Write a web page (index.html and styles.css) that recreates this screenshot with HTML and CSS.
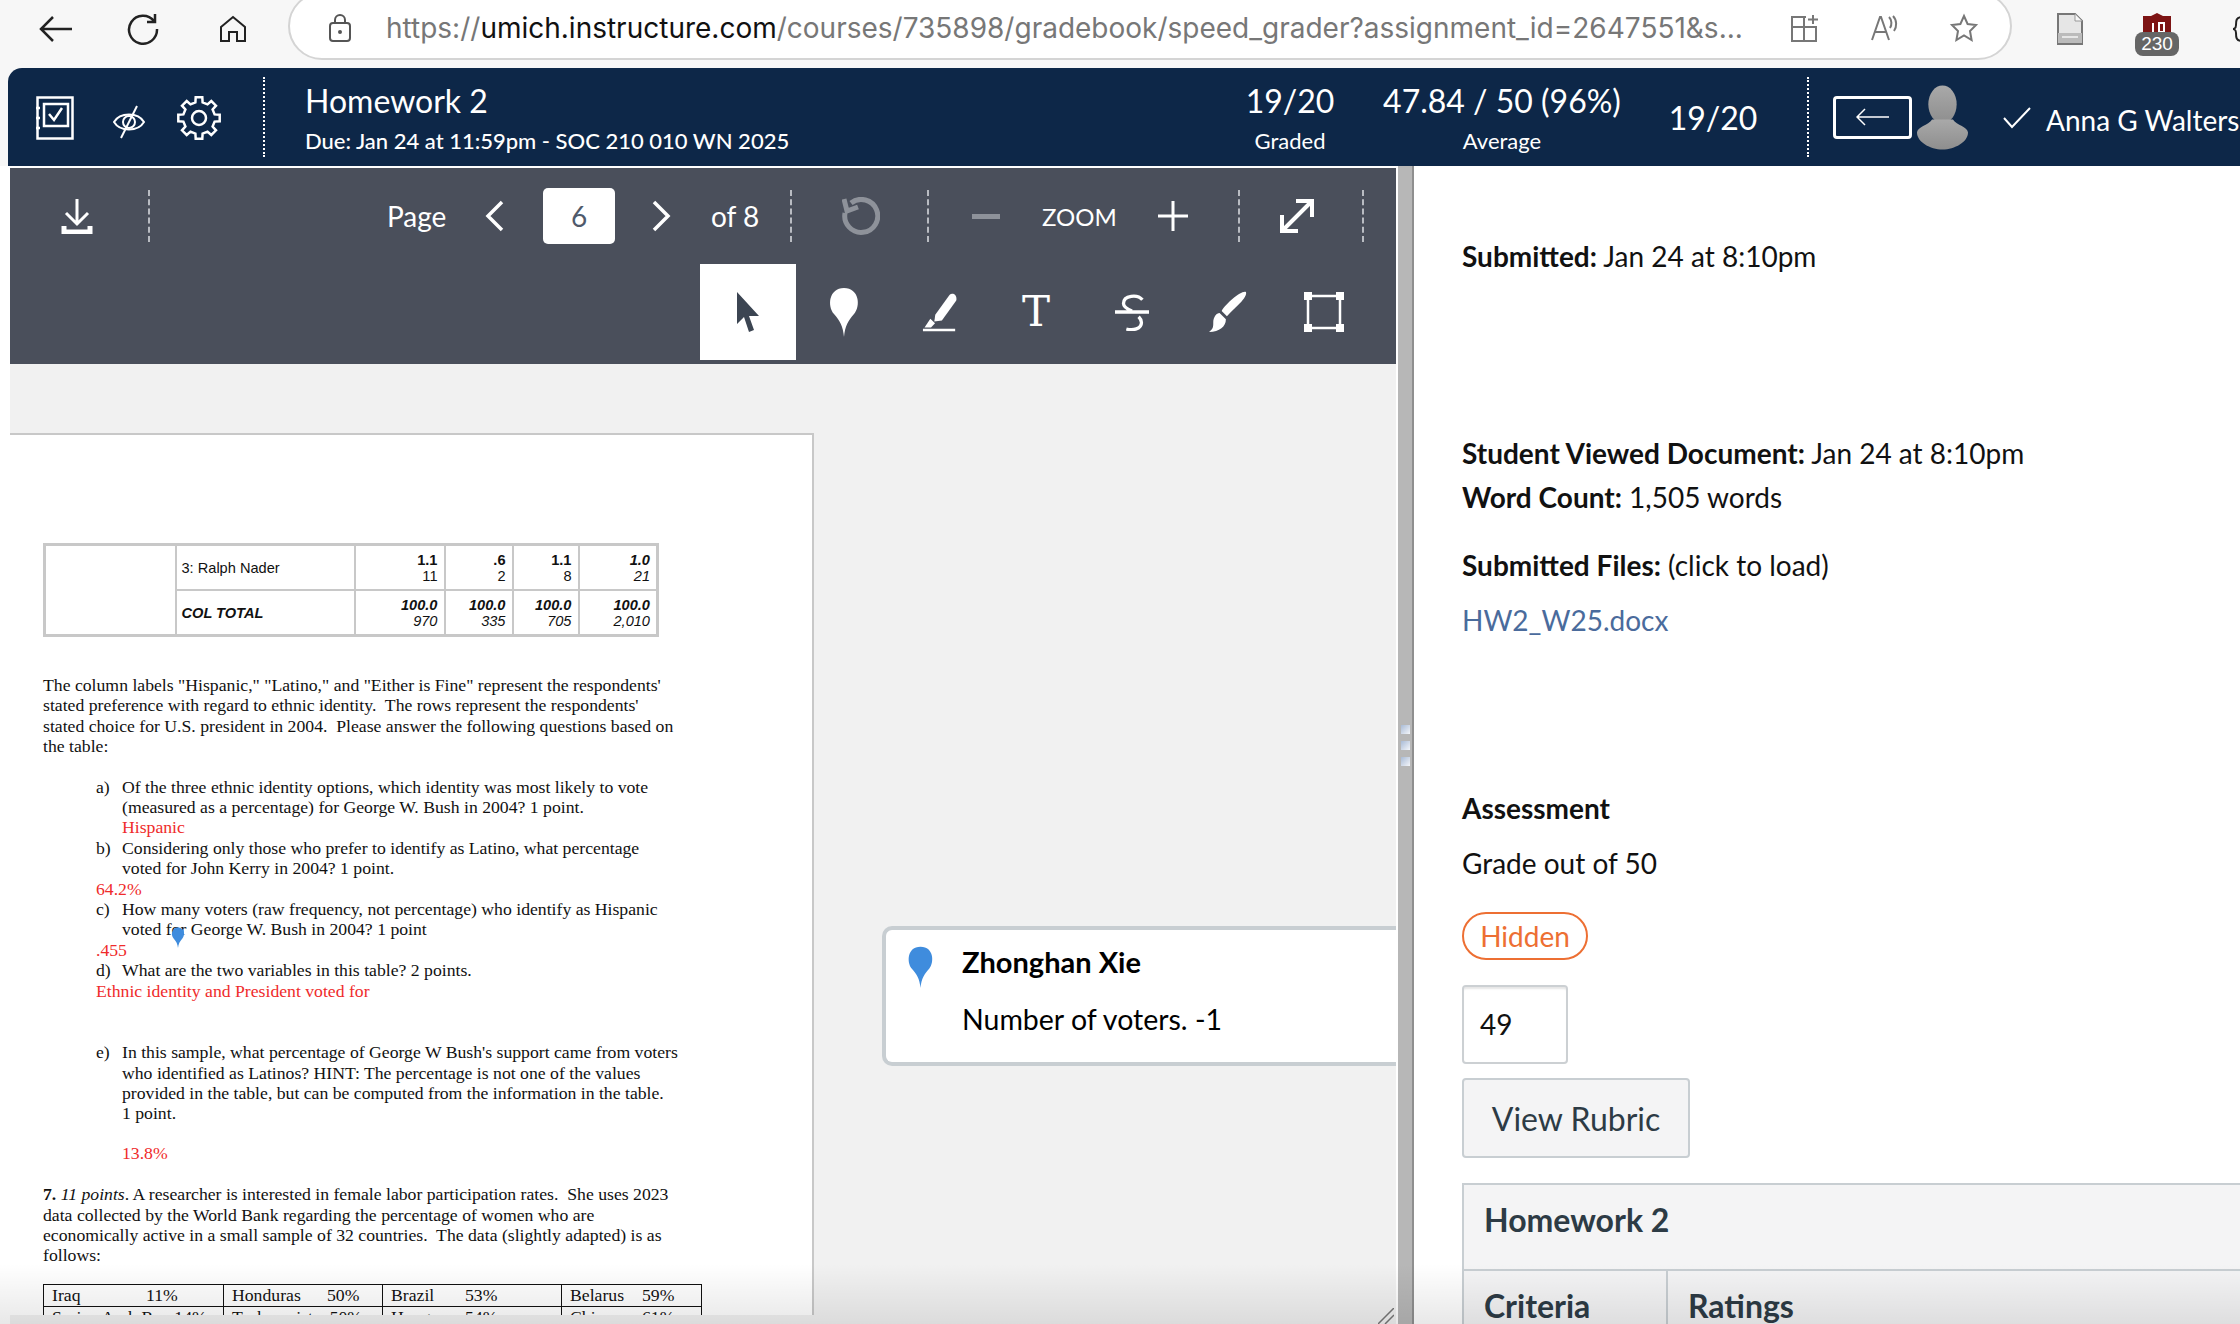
FILE: index.html
```html
<!DOCTYPE html>
<html lang="en">
  <head>
    <meta charset="UTF-8" />
    <title>SpeedGrader</title>
    <link rel="stylesheet" href="styles.css">
  </head>
  <body>
    <div class="browser-bar">
      <svg class="nav-icon back" viewBox="0 0 34 28"><path d="M33 14H2M14 2 2 14l12 12" /></svg>
      <svg class="nav-icon reload" viewBox="0 0 34 34"><path d="M27 9a14 14 0 1 0 3 8M28 2v8h-8" /></svg>
      <svg class="nav-icon home" viewBox="0 0 30 30"><path d="M3 13 15 3l12 10v14h-8v-9h-8v9H3z" /></svg>
      <div class="url-pill">
        <svg class="lock" viewBox="0 0 24 30"><rect x="2" y="10" width="20" height="18" rx="3" /><path d="M7 10V7a5 5 0 0 1 10 0v3" /><circle cx="12" cy="19" r="1" /></svg>
        <div class="url"><span class="url-dim">https://</span>umich.instructure.com<span class="url-dim">/courses/735898/gradebook/speed_grader?assignment_id=2647551&amp;s...</span></div>
        <svg class="pill-icon" viewBox="0 0 30 30"><path d="M17 4H3v24h24V14H3M15 4v24M24 2v9M19 6.500h10" /></svg>
        <svg class="pill-icon" viewBox="0 0 30 30"><path d="M3 27 11 4h1l8 23M6 19h11M20 4c3 3 3 8 1 11M24 3c4 4 4 11 1 15" /></svg>
        <svg class="pill-icon" viewBox="0 0 30 30"><path d="m15 3 3.600 8 8.400 1-6 6 1.600 9-7.600-4.500L7.400 27 9 18l-6-6 8.400-1z" /></svg>
      </div>
      <svg class="ext-doc" viewBox="0 0 28 32"><path d="M2 1h17l7 7v23H2z" fill="#e6e6e6" stroke="#777" stroke-width="2" /><path d="M19 1v7h7" fill="#f6f6f6" stroke="#999" /><rect x="2" y="20" width="24" height="10" fill="#bbb" /><rect x="6" y="23" width="16" height="2" fill="#e6e6e6" /></svg>
      <div class="ext-badge">
        <svg class="ext-cal" viewBox="0 0 28 21"><path d="M0 4h8l6-3 6 3h8v17H0z" fill="#7d1414" /><path d="M10 11v9M16 11h5v9h-5z" stroke="#fff" stroke-width="2" fill="none" /></svg>
        <span class="ext-count">230</span>
      </div>
      <svg class="ext-edge" viewBox="0 0 10 32"><path d="M10 4C4 4 4 8 4 12s-3 4-3 4 3 0 3 4 0 8 6 8" /></svg>
    </div>

    <header class="grader-header">
      <svg class="hd-icon checklist" viewBox="0 0 38 44"><rect x="1.500" y="1.500" width="35" height="41" /><rect x="8" y="8" width="24" height="22" /><path d="m13 18 5 6 8-12M0 12h4M0 22h4M0 32h4" /></svg>
      <svg class="hd-icon eye" viewBox="0 0 32 36"><path d="M1 18c6-10 24-10 30 0-6 10-24 10-30 0z" /><circle cx="16" cy="18" r="6" /><path d="M24 2 8 34" /></svg>
      <svg class="hd-icon gear" viewBox="0 0 44 44"><path d="M18.400 6.400 18.700 1.300H25.300L25.600 6.400 30.500 8.400 34.300 5 39 9.700 35.600 13.500 37.600 18.400 42.700 18.700V25.300L37.600 25.600 35.600 30.500 39 34.300 34.300 39 30.500 35.600 25.600 37.600 25.300 42.700H18.700L18.400 37.600 13.500 35.600 9.700 39 5 34.300 8.400 30.500 6.400 25.600 1.300 25.300V18.700L6.400 18.400 8.400 13.500 5 9.700 9.700 5 13.500 8.400z" /><circle cx="22" cy="22" r="7" /></svg>
      <div class="hd-sep first"></div>
      <div class="hd-title">
        <div class="hd-name">Homework 2</div>
        <div class="hd-due">Due: Jan 24 at 11:59pm - SOC 210 010 WN 2025</div>
      </div>
      <div class="hd-stat graded"><div class="stat-num">19/20</div><div class="stat-label">Graded</div></div>
      <div class="hd-stat average"><div class="stat-num">47.84 / 50 (96%)</div><div class="stat-label">Average</div></div>
      <div class="hd-count">19/20</div>
      <div class="hd-sep"></div>
      <button class="hd-back"><svg viewBox="0 0 34 20"><path d="M33 10H1M9 2l-8 8 8 8" /></svg></button>
      <svg class="avatar" viewBox="0 0 54 68"><defs><linearGradient id="av" x1="0" y1="0" x2="0" y2="1"><stop offset="0" stop-color="#a9a9a9" /><stop offset="1" stop-color="#8e8e8e" /></linearGradient></defs><ellipse cx="27" cy="20" rx="15" ry="20" fill="url(#av)" /><path d="M16 36c-4 6-16 8-16 14 0 10 14 18 27 18s27-8 27-18c0-6-12-8-16-14z" fill="url(#av)" /></svg>
      <svg class="name-check" viewBox="0 0 28 22"><path d="m1 11 8 9L27 1" /></svg>
      <div class="hd-student">Anna G Walters</div>
    </header>

    <main class="grader-main">
      <section class="viewer">
        <div class="toolbar">
          <div class="tool-row top">
            <svg class="tb-icon download" viewBox="0 0 34 36"><path d="M17 1v24M6 15l11 11 11-11" /><path class="thick" d="M4 28v6h26v-6" /></svg>
            <div class="tb-sep first"></div>
            <span class="tb-label page-label">Page</span>
            <svg class="tb-chevron" viewBox="0 0 20 32"><path d="M17 2 3 16l14 14" /></svg>
            <div class="page-box">6</div>
            <svg class="tb-chevron" viewBox="0 0 20 32"><path d="m3 2 14 14L3 30" /></svg>
            <span class="tb-label of-label">of 8</span>
            <div class="tb-sep"></div>
            <svg class="tb-icon rotate" viewBox="0 0 38 38"><path d="M9 6a16.500 16.500 0 1 1-6 10M2 2l3 12 11-4" /></svg>
            <div class="tb-sep"></div>
            <div class="tb-minus"></div>
            <span class="tb-zoom">ZOOM</span>
            <svg class="tb-icon plus" viewBox="0 0 30 30"><path d="M15 0v30M0 15h30" /></svg>
            <div class="tb-sep"></div>
            <svg class="tb-icon expand" viewBox="0 0 36 36"><path d="M3 33 33 3M17 3h16v16M3 17v16h16" /></svg>
            <div class="tb-sep"></div>
          </div>
          <div class="tool-row bottom">
            <div class="tool active"><svg class="tool-svg arrow" viewBox="0 0 24 42"><path d="M1 1v32l7-7 5 15 5-2-5-14h10z" fill="#3c4552" /></svg></div>
            <div class="tool"><svg class="tool-svg pin" viewBox="0 0 36 50"><path d="M18 50c-1-11-4-16-10-23C1 19 3 1 18 1s17 18 10 26c-6 7-9 12-10 23z" fill="#fff" /></svg></div>
            <div class="tool"><svg class="tool-svg marker" viewBox="0 0 38 42"><path d="m14 24 15-21c2-2 5-1 6 0s2 4 1 6L21 30l-8 1z" fill="#fff" /><path d="m9 30 3 3-3 3H5zM1 40h34" stroke="#fff" stroke-width="2.500" fill="#fff" /></svg></div>
            <div class="tool"><span class="tool-t">T</span></div>
            <div class="tool"><svg class="tool-svg strike" viewBox="0 0 36 40"><path d="M29 7C24 1 9 2 9 11c0 4 4 6 9 8M0 20h36M12 38c7 2 16 0 16-7 0-3-1-4-3-6" fill="none" stroke="#fff" stroke-width="3.500" /></svg></div>
            <div class="tool"><svg class="tool-svg" viewBox="0 0 38 40"><path d="M36 1c1 2-1 6-6 11-5 5-9 9-12 12l-5-5C17 12 32-1 36 1zM11 21l6 6c0 7-6 12-16 12 4-3 4-5 4-9 0-5 3-9 6-9z" fill="#fff" /></svg></div>
            <div class="tool"><svg class="tool-svg" viewBox="0 0 40 40"><rect x="4" y="4" width="32" height="32" fill="none" stroke="#fff" stroke-width="2.500" /><path d="M0 0h8v8H0zM32 0h8v8h-8zM0 32h8v8H0zM32 32h8v8h-8z" fill="#fff" /></svg></div>
          </div>
        </div>

        <div class="doc-area">
          <article class="page">
            <table class="cross">
              <colgroup><col class="c-stub"><col class="c-name"><col class="c-a"><col class="c-b"><col class="c-c"><col class="c-d"></colgroup>
              <tr>
                <td rowspan="2"></td>
                <td class="row-name">3: Ralph Nader</td>
                <td class="num"><b>1.1</b><br>11</td>
                <td class="num"><b>.6</b><br>2</td>
                <td class="num"><b>1.1</b><br>8</td>
                <td class="num it"><b>1.0</b><br>21</td>
              </tr>
              <tr>
                <td class="row-name it"><b>COL TOTAL</b></td>
                <td class="num it"><b>100.0</b><br>970</td>
                <td class="num it"><b>100.0</b><br>335</td>
                <td class="num it"><b>100.0</b><br>705</td>
                <td class="num it"><b>100.0</b><br>2,010</td>
              </tr>
            </table>

            <p class="intro">The column labels "Hispanic," "Latino," and "Either is Fine" represent the respondents'<br>stated preference with regard to ethnic identity.&nbsp; The rows represent the respondents'<br>stated choice for U.S. president in 2004.&nbsp; Please answer the following questions based on<br>the table:</p>

            <div class="question"><span class="q-mark">a)</span><div>Of the three ethnic identity options, which identity was most likely to vote<br>(measured as a percentage) for George W. Bush in 2004? 1 point.<br><span class="red">Hispanic</span></div></div>
            <div class="question"><span class="q-mark">b)</span><div>Considering only those who prefer to identify as Latino, what percentage<br>voted for John Kerry in 2004? 1 point.</div></div>
            <div class="answer red">64.2%</div>
            <div class="question"><span class="q-mark">c)</span><div>How many voters (raw frequency, not percentage) who identify as Hispanic<br>voted f<span class="pin-anchor">o<svg class="doc-pin" viewBox="0 0 36 48"><path d="M18 48c-1-10-4-15-10-22C1 18 3 1 18 1s17 17 10 25c-6 7-9 12-10 22z" /></svg></span>r George W. Bush in 2004? 1 point</div></div>
            <div class="answer red">.455</div>
            <div class="question"><span class="q-mark">d)</span><div>What are the two variables in this table? 2 points.</div></div>
            <div class="answer red">Ethnic identity and President voted for</div>

            <div class="question q-e"><span class="q-mark">e)</span><div>In this sample, what percentage of George W Bush's support came from voters<br>who identified as Latinos? HINT: The percentage is not one of the values<br>provided in the table, but can be computed from the information in the table.<br>1 point.</div></div>
            <div class="answer-e red">13.8%</div>

            <p class="q-seven"><b>7.</b> <i>11 points</i>. A researcher is interested in female labor participation rates.&nbsp; She uses 2023<br>data collected by the World Bank regarding the percentage of women who are<br>economically active in a small sample of 32 countries.&nbsp; The data (slightly adapted) is as<br>follows:</p>

            <table class="countries">
              <colgroup><col class="k-a"><col class="k-b"><col class="k-c"><col class="k-d"></colgroup>
              <tr><td><span>Iraq</span><span>11%</span></td><td><span>Honduras</span><span>50%</span></td><td><span>Brazil</span><span>53%</span></td><td><span>Belarus</span><span>59%</span></td></tr>
              <tr><td><span>Syrian Arab Rep.</span><span>14%</span></td><td><span>Turkmenistan</span><span>50%</span></td><td><span>Hungary</span><span>54%</span></td><td><span>China</span><span>61%</span></td></tr>
            </table>
          </article>

          <aside class="comment">
            <svg class="comment-pin" viewBox="0 0 36 60" preserveAspectRatio="none"><path d="M18 60c-1-14-5-20-11-28C1 24 1 1 18 1s17 23 11 31c-6 8-10 14-11 28z" /></svg>
            <div class="comment-body">
              <div class="comment-name">Zhonghan Xie</div>
              <div class="comment-text">Number of voters. -1</div>
            </div>
          </aside>

          <svg class="resize-grip" viewBox="0 0 16 16"><path d="M16 0 0 16M16 7l-9 9" /></svg>
        </div>
      </section>

      <div class="splitter">
        <span class="split-dot"></span><span class="split-dot"></span><span class="split-dot"></span>
      </div>

      <section class="panel">
        <p class="meta submitted"><b>Submitted:</b> Jan 24 at 8:10pm</p>
        <p class="meta viewed"><b>Student Viewed Document:</b> Jan 24 at 8:10pm</p>
        <p class="meta words"><b>Word Count:</b> 1,505 words</p>
        <p class="meta files"><b>Submitted Files:</b> (click to load)</p>
        <a class="file-link" href="#">HW2_W25.docx</a>
        <h2 class="assess">Assessment</h2>
        <div class="grade-out">Grade out of 50</div>
        <span class="hidden-pill">Hidden</span>
        <div class="grade-box">49</div>
        <button class="rubric-btn">View Rubric</button>
        <div class="rubric">
          <div class="rubric-title">Homework 2</div>
          <div class="rubric-head"><div class="rubric-crit">Criteria</div><div class="rubric-rate">Ratings</div></div>
        </div>
      </section>
    </main>

    <div class="bottom-fade"></div>
  </body>
</html>
```

FILE: styles.css
```css
* {
  box-sizing: border-box;
}
html,
body {
  margin: 0;
  height: 100%;
}
body {
  width: 2240px;
  height: 1324px;
  overflow: hidden;
  background: #f7f7f7;
  font-family: Lato, sans-serif;
  position: relative;
}

/* browser chrome */
.browser-bar {
  height: 68px;
  padding-bottom: 10px;
  display: flex;
  align-items: center;
  overflow: hidden;
}
.nav-icon {
  fill: none;
  stroke: #222;
  stroke-width: 2.500;
  flex: none;
}
.nav-icon.back {
  width: 34px;
  height: 28px;
  margin-left: 39px;
}
.nav-icon.reload {
  width: 34px;
  height: 34px;
  margin-left: 54px;
}
.nav-icon.home {
  width: 30px;
  height: 30px;
  margin-left: 57px;
  stroke-width: 2;
}
.url-pill {
  width: 1724px;
  height: 68px;
  margin: -6px 0 0 40px;
  flex: none;
  display: flex;
  align-items: center;
  background: #fff;
  border: 2px solid #d4d4d4;
  border-radius: 34px;
  padding: 4px 0 0 38px;
}
.lock {
  width: 24px;
  height: 30px;
  fill: none;
  stroke: #555;
  stroke-width: 2;
  flex: none;
}
.url {
  margin-left: 34px;
  width: 1353px;
  flex: none;
  font-family: Inter, sans-serif;
  font-size: 28px;
  color: #111;
  white-space: nowrap;
}
.url-dim {
  color: #777;
}
.pill-icon {
  width: 30px;
  height: 30px;
  margin-left: 50px;
  fill: none;
  stroke: #777;
  stroke-width: 2;
  flex: none;
}
.ext-doc {
  width: 28px;
  height: 32px;
  margin-left: 44px;
  flex: none;
}
.ext-badge {
  margin: 10px 0 0 51px;
  width: 44px;
  display: flex;
  flex-direction: column;
  align-items: center;
  flex: none;
}
.ext-cal {
  width: 28px;
  height: 21px;
  display: block;
  margin-bottom: -1px;
}
.ext-count {
  width: 44px;
  height: 24px;
  background: #666;
  color: #fff;
  border-radius: 8px;
  font-family: "Liberation Sans", sans-serif;
  font-size: 19px;
  line-height: 24px;
  text-align: center;
  position: relative;
}
.ext-edge {
  width: 10px;
  height: 32px;
  margin-left: 53px;
  fill: none;
  stroke: #222;
  stroke-width: 2;
  flex: none;
}

/* assignment header */
.grader-header {
  height: 98px;
  margin-left: 8px;
  background: #0d2748;
  border-top-left-radius: 14px;
  display: flex;
  align-items: center;
  color: #fff;
  overflow: hidden;
}
.hd-icon {
  fill: none;
  stroke: #fff;
  stroke-width: 2.500;
  flex: none;
}
.hd-icon.checklist {
  width: 38px;
  height: 44px;
  margin: 2px 0 0 28px;
}
.hd-icon.eye {
  width: 32px;
  height: 36px;
  margin: 10px 0 0 39px;
  stroke-width: 2;
}
.hd-icon.gear {
  width: 44px;
  height: 44px;
  margin: 2px 0 0 32px;
}
.hd-sep {
  width: 0;
  height: 80px;
  border-left: 2px dotted #fff;
  flex: none;
}
.hd-sep.first {
  margin-left: 42px;
}
.hd-title {
  margin-left: 40px;
  width: 900px;
  flex: none;
}
.hd-name {
  font-size: 32px;
  line-height: 38px;
  padding-top: 3px;
}
.hd-due {
  margin-top: 7px;
  font-size: 22px;
  font-weight: 500;
  line-height: 28px;
}
.hd-stat {
  text-align: center;
  flex: none;
}
.stat-num {
  font-size: 32px;
  line-height: 38px;
  padding-top: 3px;
}
.stat-label {
  margin-top: 7px;
  font-size: 22px;
  line-height: 28px;
}
.hd-stat.graded {
  width: 130px;
  margin-left: 20px;
}
.hd-stat.average {
  width: 250px;
  margin-left: 22px;
}
.hd-count {
  width: 100px;
  margin-left: 36px;
  text-align: center;
  font-size: 32px;
  flex: none;
}
.hd-count + .hd-sep {
  margin-left: 44px;
}
.hd-back {
  width: 79px;
  height: 43px;
  margin: 0 0 0 24px;
  padding: 0;
  flex: none;
  background: transparent;
  border: 3px solid #fff;
  border-radius: 4px;
  display: flex;
  align-items: center;
  justify-content: center;
}
.hd-back svg {
  width: 34px;
  height: 20px;
  fill: none;
  stroke: #fff;
  stroke-width: 1.500;
}
.avatar {
  width: 51px;
  height: 67px;
  margin-left: 5px;
  flex: none;
}
.name-check {
  width: 28px;
  height: 22px;
  margin: 2px 0 0 35px;
  fill: none;
  stroke: #fff;
  stroke-width: 2;
  flex: none;
}
.hd-student {
  margin: 6px 0 0 15px;
  font-size: 28px;
  white-space: nowrap;
  flex: none;
}

/* main split */
.grader-main {
  height: 1158px;
  display: flex;
}
.viewer {
  width: 1398px;
  flex: none;
  padding: 2px 2px 0 10px;
  background: #fff;
  display: flex;
  flex-direction: column;
}
.toolbar {
  height: 196px;
  flex: none;
  background: #4a4f5b;
  color: #fff;
}
.tool-row {
  display: flex;
  align-items: center;
}
.tool-row.top {
  height: 96px;
}
.tool-row.bottom {
  padding-left: 690px;
}
.tb-sep {
  width: 0;
  height: 52px;
  border-left: 2px dashed #b9bcc2;
  flex: none;
}
.tb-icon {
  fill: none;
  stroke: #fff;
  stroke-width: 3;
  flex: none;
}
.tb-icon .thick {
  stroke-width: 5;
}
.tb-icon.download {
  width: 34px;
  height: 36px;
  margin-left: 50px;
}
.tb-sep.first {
  margin-left: 54px;
}
.tb-label {
  font-size: 28px;
  white-space: nowrap;
  flex: none;
}
.page-label {
  margin-left: 237px;
  width: 62px;
}
.tb-chevron {
  width: 20px;
  height: 32px;
  fill: none;
  stroke: #fff;
  stroke-width: 3.500;
  flex: none;
}
.page-label + .tb-chevron {
  margin: 0 38px 0 36px;
}
.page-box + .tb-chevron {
  margin: 0 40px 0 36px;
}
.page-box {
  width: 72px;
  height: 56px;
  background: #fff;
  border-radius: 5px;
  color: #4f5a6b;
  font-size: 28px;
  line-height: 56px;
  text-align: center;
  flex: none;
}
.of-label {
  width: 46px;
  margin-right: 33px;
}
.tb-icon.rotate {
  width: 38px;
  height: 38px;
  margin: 0 47px 0 50px;
  stroke: #8e929a;
  stroke-width: 5;
}
.tb-minus {
  width: 28px;
  height: 5px;
  margin-left: 43px;
  background: #8e929a;
  flex: none;
}
.tb-zoom {
  margin-left: 42px;
  width: 76px;
  font-size: 24px;
  flex: none;
}
.tb-icon.plus {
  width: 30px;
  height: 30px;
  margin: 0 50px 0 40px;
}
.tb-icon.expand {
  width: 36px;
  height: 36px;
  margin: 0 47px 0 39px;
  stroke-width: 4;
}
.tool {
  width: 96px;
  height: 96px;
  display: flex;
  align-items: center;
  justify-content: center;
  flex: none;
}
.tool.active {
  background: #fff;
}
.tool-svg {
  width: 40px;
  height: 46px;
}
.tool-svg.arrow {
  width: 24px;
  height: 42px;
}
.tool-svg.pin {
  width: 36px;
  height: 50px;
}
.tool-svg.marker {
  width: 36px;
  height: 40px;
}
.tool-svg.strike {
  width: 34px;
  height: 38px;
}
.tool-t {
  font-family: "DejaVu Serif", serif;
  font-size: 42px;
  line-height: 1;
}

/* document area */
.doc-area {
  flex: 1;
  min-height: 0;
  display: flex;
  align-items: flex-start;
  background: #f1f1f1;
  position: relative;
  overflow: hidden;
}
.page {
  width: 804px;
  height: 882px;
  margin-top: 69px;
  padding: 108px 0 0 33px;
  flex: none;
  background: #fff;
  border: 2px solid #c8c8c8;
  border-left: 0;
  border-bottom: 0;
  overflow: hidden;
  font-family: "Liberation Serif", serif;
  font-size: 17.700px;
  line-height: 20.400px;
  color: #111;
}
.cross {
  width: 613px;
  height: 94px;
  border-collapse: collapse;
  table-layout: fixed;
  border: 3px solid #c8c8c8;
  font-family: "Liberation Sans", sans-serif;
  font-size: 14.600px;
  line-height: 16px;
}
.c-stub {
  width: 131px;
}
.c-name {
  width: 179px;
}
.c-a {
  width: 90px;
}
.c-b {
  width: 68px;
}
.c-c {
  width: 66px;
}
.c-d {
  width: 79px;
}
.cross td {
  border: 2px solid #c8c8c8;
  padding: 0 6px;
}
.cross .row-name {
  padding-left: 5px;
}
.cross .num {
  text-align: right;
}
.it {
  font-style: italic;
}
.intro {
  margin: 38px 0 0;
}
.question {
  display: flex;
}
.intro + .question {
  margin-top: 20px;
}
.q-mark {
  width: 26px;
  margin-left: 53px;
  flex: none;
}
.answer {
  margin-left: 53px;
}
.red {
  color: #ef2b2b;
}
.pin-anchor {
  position: relative;
}
.doc-pin {
  position: absolute;
  left: -3px;
  top: 8px;
  width: 18px;
  height: 21px;
  fill: #3f8cdd;
}
.question.q-e {
  margin-top: 41px;
}
.answer-e {
  margin: 19px 0 0 79px;
}
.q-seven {
  margin: 21px 0 0;
}
.countries {
  width: 658px;
  margin-top: 18px;
  border-collapse: collapse;
  table-layout: fixed;
  line-height: 21px;
}
.k-a {
  width: 180px;
}
.k-b {
  width: 159px;
}
.k-c {
  width: 179px;
}
.k-d {
  width: 140px;
}
.countries td {
  border: 1.500px solid #111;
  padding: 0 8px;
  white-space: nowrap;
}
.countries td span {
  display: inline-block;
}
.countries td:nth-child(1) span:first-child {
  min-width: 94px;
}
.countries td:nth-child(2) span:first-child {
  min-width: 95px;
}
.countries td:nth-child(3) span:first-child {
  min-width: 74px;
}
.countries td:nth-child(4) span:first-child {
  min-width: 72px;
}
.comment {
  width: 517px;
  height: 140px;
  margin: 562px 0 0 68px;
  flex: none;
  display: flex;
  padding: 12px 0 0 20px;
  background: #fff;
  border: 4px solid #c8ced2;
  border-right: 0;
  border-radius: 10px 0 0 10px;
}
.comment-pin {
  width: 29px;
  height: 42px;
  margin-top: 4px;
  fill: #3f8cdd;
  flex: none;
}
.comment-body {
  margin-left: 27px;
  color: #000;
}
.comment-name {
  font-size: 29px;
  font-weight: 700;
  line-height: 40px;
}
.comment-text {
  margin-top: 17px;
  font-size: 28.500px;
  line-height: 40px;
}
.resize-grip {
  position: absolute;
  right: 2px;
  bottom: 0;
  width: 16px;
  height: 16px;
  fill: none;
  stroke: #777;
  stroke-width: 1.500;
}

/* splitter */
.splitter {
  width: 16px;
  flex: none;
  background: #b7b7b7;
  border-right: 2px solid #8f8f8f;
  display: flex;
  flex-direction: column;
  align-items: center;
  justify-content: center;
  gap: 7px;
}
.split-dot {
  width: 9px;
  height: 9px;
  background: linear-gradient(to bottom right, #a9bbd6, #f4f6fa);
}

/* right panel */
.panel {
  flex: 1;
  min-width: 0;
  padding-left: 48px;
  background: #fff;
  color: #111;
  font-size: 28px;
  overflow: hidden;
}
.meta {
  margin: 0;
  line-height: 36px;
  white-space: nowrap;
}
.meta b {
  font-weight: 700;
}
.meta.submitted {
  margin-top: 72px;
}
.meta.viewed {
  margin-top: 161px;
}
.meta.words {
  margin-top: 8px;
}
.meta.files {
  margin-top: 32px;
}
.file-link {
  display: block;
  margin-top: 19px;
  line-height: 36px;
  color: #4a6b9c;
  text-decoration: none;
}
.assess {
  margin: 152px 0 0;
  font-size: 28px;
  font-weight: 700;
  line-height: 36px;
}
.grade-out {
  margin-top: 19px;
  line-height: 36px;
}
.hidden-pill {
  display: block;
  width: 126px;
  height: 48px;
  margin-top: 31px;
  border: 2px solid #ed6f33;
  border-radius: 24px;
  color: #ed6f33;
  line-height: 44px;
  text-align: center;
}
.grade-box {
  width: 106px;
  height: 79px;
  margin-top: 25px;
  padding-left: 16px;
  border: 2px solid #ccd0d3;
  border-radius: 4px;
  box-shadow: inset 0 3px 2px -1px #e6e6e6;
  line-height: 75px;
}
.rubric-btn {
  display: block;
  width: 228px;
  height: 80px;
  margin-top: 14px;
  padding: 0;
  background: #f4f4f5;
  border: 2px solid #c8ced2;
  border-radius: 4px;
  color: #2d3b45;
  font-family: Lato, sans-serif;
  font-size: 32px;
}
.rubric {
  width: 800px;
  margin-top: 25px;
  border: 2px solid #c8ced2;
  border-right: 0;
  background: #f4f4f5;
  color: #2d3b45;
  font-size: 32px;
  font-weight: 700;
}
.rubric-title {
  height: 84px;
  padding-left: 20px;
  line-height: 70px;
}
.rubric-head {
  height: 80px;
  display: flex;
  border-top: 2px solid #c8ced2;
}
.rubric-crit {
  width: 204px;
  padding-left: 20px;
  line-height: 70px;
  border-right: 2px solid #c8ced2;
}
.rubric-rate {
  padding-left: 20px;
  line-height: 70px;
}

/* screenshot shadow along the bottom edge */
.bottom-fade {
  position: absolute;
  left: 0;
  right: 0;
  bottom: 0;
  height: 60px;
  background: linear-gradient(to bottom, rgba(0, 0, 0, 0), rgba(0, 0, 0, 0.09));
  pointer-events: none;
}
```
